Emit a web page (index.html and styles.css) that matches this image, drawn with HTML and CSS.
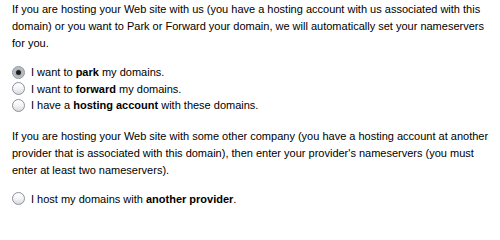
FILE: index.html
```html
<!DOCTYPE html>
<html>
<head>
<meta charset="utf-8">
<link rel="stylesheet" href="styles.css">
</head>
<body>
<div class="page">
  <p class="intro">If you are hosting your Web site with us (you have a hosting account with us associated with this domain) or you want to Park or Forward your domain, we will automatically set your nameservers for you.</p>
  <div class="options first">
    <label class="opt"><span class="radio checked"></span><span class="label">I want to <b>park</b> my domains.</span></label>
    <label class="opt"><span class="radio"></span><span class="label">I want to <b>forward</b> my domains.</span></label>
    <label class="opt"><span class="radio"></span><span class="label">I have a <b>hosting account</b> with these domains.</span></label>
  </div>
  <p class="intro">If you are hosting your Web site with some other company (you have a hosting account at another provider that is associated with this domain), then enter your provider's nameservers (you must enter at least two nameservers).</p>
  <div class="options">
    <label class="opt"><span class="radio"></span><span class="label">I host my domains with <b>another provider</b>.</span></label>
  </div>
</div>
</body>
</html>
```
FILE: styles.css
```css
html, body { margin: 0; padding: 0; background: #fff; }
body { font-family: "Liberation Sans", Arial, sans-serif; font-size: 11px; color: #000; }
.page { padding: 1px 0 0 12px; width: 486px; }
.intro { margin: 0; line-height: 17px; }
.options { display: flex; flex-direction: column; margin: 12px 0 15px 0; }
.options.first { margin-bottom: 14px; }
.opt { display: flex; align-items: center; height: 16.5px; line-height: 16px; }
.radio {
  width: 13px; height: 13px; border-radius: 50%; box-sizing: border-box;
  border: 1px solid #8a929c;
  background: linear-gradient(180deg, #ffffff 0%, #f4f4f4 50%, #d9d9d9 100%);
  margin: 0 6px 0 0; flex: none; position: relative;
}
.radio.checked {
  background: radial-gradient(circle at 50% 50%, #9aa0a8 0, #b8bcc2 60%, #e4e4e4 100%);
}
.radio.checked::after {
  content: ""; position: absolute; left: 3px; top: 3px; width: 5px; height: 5px; border-radius: 50%;
  background: #1e1e1e;
}
```
